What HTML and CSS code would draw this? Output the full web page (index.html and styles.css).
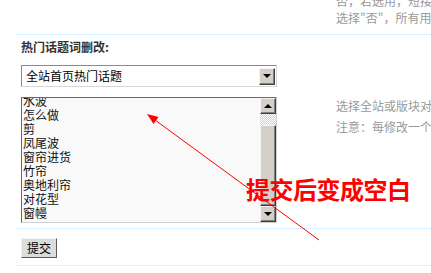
FILE: index.html
```html
<!DOCTYPE html>
<html lang="zh-CN">
<head>
<meta charset="utf-8">
<title>热门话题词删改</title>
<link rel="stylesheet" href="styles.css">
</head>
<body>
<div class="page">
  <div class="row row-top">
    <div class="cell-left"></div>
    <div class="cell-tip tip-top">
      <div>否，若选用，短接受用户名单</div>
      <div>选择"否"，所有用户都可以使用</div>
    </div>
  </div>
  <div class="row-title">热门话题词删改:</div>
  <div class="row row-main">
    <div class="cell-left">
      <div class="select">
        <span class="select-text">全站首页热门话题</span>
        <span class="w-btn"><span class="tri-down"></span></span>
      </div>
      <div class="listbox">
        <div class="list">
          <div class="list-inner">
            <div>水波</div>
            <div>怎么做</div>
            <div>剪</div>
            <div>凤尾波</div>
            <div>窗帘进货</div>
            <div>竹帘</div>
            <div>奥地利帘</div>
            <div>对花型</div>
            <div>窗幔</div>
          </div>
        </div>
        <div class="scrollbar">
          <span class="w-btn sb-btn"><span class="tri-up"></span></span>
          <span class="sb-track"></span>
          <span class="w-btn sb-thumb"></span>
          <span class="w-btn sb-btn"><span class="tri-down"></span></span>
        </div>
      </div>
    </div>
    <div class="cell-tip tip-main">
      <div>选择全站或版块对应的热门话题</div>
      <div>注意：每修改一个版块的热门话题都需要提交一次</div>
    </div>
  </div>
  <div class="row row-submit">
    <button class="btn-submit" type="button">提交</button>
  </div>
</div>
<svg class="annot-arrow" width="431" height="273" viewBox="0 0 431 273">
  <line x1="319" y1="240" x2="155" y2="120" stroke="#ff0000" stroke-width="1"/>
  <polygon points="147,114 158.5,117 153.5,124" fill="#ff0000"/>
</svg>
<div class="annot-text">提交后变成空白</div>
</body>
</html>
```

FILE: styles.css
```css
html, body {
  margin: 0;
  padding: 0;
  background: #fff;
  overflow: hidden;
}

body {
  position: relative;
  width: 431px;
  height: 273px;
  font: 12px "Noto Sans CJK SC", "Liberation Sans", sans-serif;
  color: #000;
}

.page {
  margin-top: -8px;
  padding-left: 16px;
}

.row {
  display: flex;
  border-bottom: 1px dotted #c4e0f4;
}

.cell-left {
  flex: none;
  width: 320px;
  padding-left: 5px;
  box-sizing: border-box;
}

.cell-tip {
  color: #999;
  white-space: nowrap;
}

.tip-top {
  line-height: 17px;
  padding-bottom: 8px;
}

.row-title {
  padding: 2px 0 8px 5px;
  line-height: 20px;
  font-weight: bold;
  color: #333;
}

.row-main {
  padding-bottom: 5px;
}

.tip-main {
  padding-top: 30px;
  line-height: 21px;
}

/* select */
.select {
  display: flex;
  align-items: center;
  justify-content: space-between;
  width: 256px;
  height: 22px;
  box-sizing: border-box;
  border: 1px solid;
  border-color: #8a8a8a #d6d6d6 #d6d6d6 #8a8a8a;
  background: #fff;
  padding: 0 1px 0 4px;
}

.select-text {
  line-height: 20px;
  color: #000;
}

.select > .w-btn {
  width: 16px;
  height: 17px;
}

/* classic 3D button */
.w-btn {
  display: flex;
  align-items: center;
  justify-content: center;
  box-sizing: border-box;
  background: #d4d0c8;
  border: 1px solid;
  border-color: #f4f4f4 #404040 #404040 #f4f4f4;
  box-shadow: inset -1px -1px 0 #808080;
}

.tri-down {
  width: 0;
  height: 0;
  border-left: 4px solid transparent;
  border-right: 4px solid transparent;
  border-top: 4px solid #000;
}

.tri-up {
  width: 0;
  height: 0;
  border-left: 4px solid transparent;
  border-right: 4px solid transparent;
  border-bottom: 4px solid #000;
}

/* listbox */
.listbox {
  display: flex;
  width: 256px;
  height: 126px;
  margin-top: 10px;
  box-sizing: border-box;
  border: 1px solid;
  border-color: #6a6a6a #cfcfcf #cfcfcf #6a6a6a;
  background: #f9f9f9;
}

.list {
  flex: 1;
  overflow: hidden;
}

.list-inner {
  margin-top: -4px;
  padding-left: 1px;
  line-height: 14px;
  color: #111;
}

.scrollbar {
  flex: none;
  width: 16px;
  display: flex;
  flex-direction: column;
}

.sb-btn {
  height: 16px;
  flex: none;
}

.sb-track {
  display: block;
  height: 11px;
  flex: none;
  background: repeating-conic-gradient(#d4d0c8 0 25%, #ffffff 0 50%) 0 0 / 2px 2px;
}

.sb-thumb {
  height: 81px;
  flex: none;
}

/* submit */
.row-submit {
  padding: 9px 0 7px 5px;
}

.btn-submit {
  width: 36px;
  height: 20px;
  padding: 0;
  margin: 0;
  box-sizing: border-box;
  border: 1px solid;
  border-color: #f2f2f2 #5a5a5a #5a5a5a #f2f2f2;
  background: #dcdcdc;
  font: 12px "Noto Sans CJK SC", sans-serif;
  color: #000;
  line-height: 18px;
}

/* annotations over the screenshot */
.annot-arrow {
  position: absolute;
  left: 0;
  top: 0;
  pointer-events: none;
}

.annot-text {
  position: absolute;
  left: 246px;
  top: 177px;
  font: bold 24px/24px "Noto Sans CJK SC", sans-serif;
  color: #ff0000;
  white-space: nowrap;
  letter-spacing: -0.5px;
}
```
